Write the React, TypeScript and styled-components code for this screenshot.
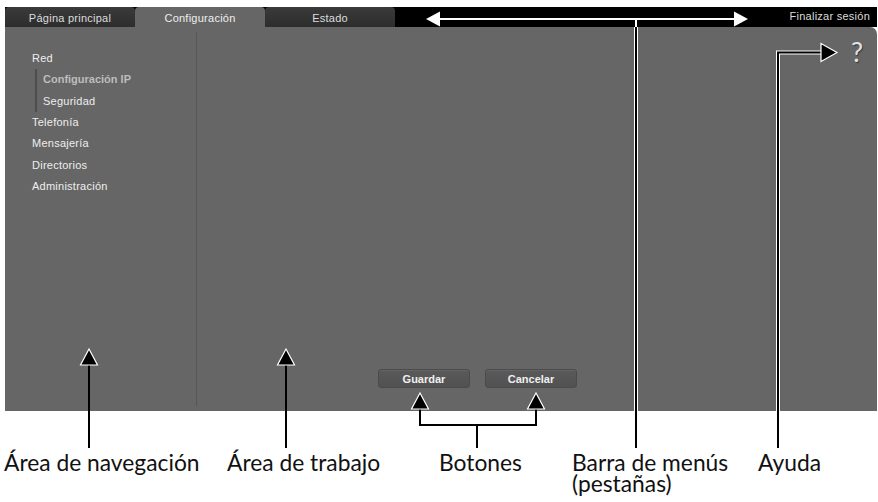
import React from "react";
import styled, { createGlobalStyle } from "styled-components";

const GlobalStyle = createGlobalStyle`
  html, body { margin: 0; padding: 0; background: #fff; }
  body { font-family: "Liberation Sans", Arial, sans-serif; }
  * { box-sizing: border-box; }
`;

const Page = styled.div`
  position: relative;
  width: 878px;
  height: 502px;
  padding-top: 7px;
  overflow: hidden;
`;

const Screen = styled.div`
  margin-left: 5px;
  width: 872px;
  display: flex;
  flex-direction: column;
`;

const TabBar = styled.div`
  height: 20px;
  background: #000;
  display: flex;
  align-items: stretch;
`;

const Tab = styled.div<{ $active?: boolean }>`
  width: 130px;
  display: flex;
  align-items: center;
  justify-content: center;
  padding-top: 2px;
  border-radius: 4px 4px 0 0;
  font-size: 11px;
  letter-spacing: 0.25px;
  color: ${(p) => (p.$active ? "#eeeeee" : "#dddddd")};
  background: ${(p) => (p.$active ? "#666666" : "linear-gradient(#3a3a3a, #2d2d2d)")};
`;

const BarSpacer = styled.div`
  flex: 1;
`;

const Logout = styled.div`
  display: flex;
  align-items: center;
  padding: 0 7px 2px 0;
  font-size: 11px;
  letter-spacing: 0.25px;
  color: #dddddd;
`;

const Panel = styled.div`
  height: 384px;
  background: #666666;
  border-radius: 0 7px 0 0;
  display: flex;
`;

const Sidebar = styled.nav`
  width: 192px;
  margin: 5px 0;
  border-right: 1px solid #565656;
  padding: 16px 0 0 27px;
  display: flex;
  flex-direction: column;
`;

const NavItem = styled.div<{ $active?: boolean }>`
  height: 21.33px;
  line-height: 21.33px;
  font-size: 11px;
  white-space: nowrap;
  letter-spacing: ${(p) => (p.$active ? "0" : "0.25px")};
  font-weight: ${(p) => (p.$active ? "bold" : "normal")};
  color: ${(p) => (p.$active ? "#bdbdbd" : "#eeeeee")};
`;

const SubGroup = styled.div`
  margin-left: 3px;
  border-left: 2px solid #4e4e4e;
  padding-left: 6px;
  display: flex;
  flex-direction: column;
`;

const WorkArea = styled.main`
  flex: 1;
  display: flex;
  flex-direction: column;
  justify-content: space-between;
`;

const HelpRow = styled.div`
  display: flex;
  justify-content: flex-end;
  padding: 11px 14px 0 0;
`;

const HelpMark = styled.span`
  font-family: "Lato", sans-serif;
  font-size: 27px;
  line-height: 27px;
  color: #e2e2e2;
  text-shadow: 1px 1px 1px #3a3a3a;
`;

const ButtonRow = styled.div`
  display: flex;
  gap: 15px;
  padding: 0 0 23px 181px;
`;

const Button = styled.button`
  width: 92px;
  height: 19px;
  padding: 0;
  border: 1px solid #4b4b4b;
  border-radius: 3px;
  background: linear-gradient(#5a5a5a, #515151);
  box-shadow: inset 0 1px 0 rgba(255, 255, 255, 0.07);
  color: #f0f0f0;
  font-family: "Liberation Sans", Arial, sans-serif;
  font-size: 11px;
  font-weight: bold;
`;

const CaptionRow = styled.div`
  margin-top: 41px;
  padding-left: 4px;
  display: grid;
  grid-template-columns: 223px 212px 133px 186px auto;
  font-family: "Lato", sans-serif;
  font-weight: 400;
  font-size: 22.8px;
  line-height: 20.5px;
  color: #111;
`;

const Caption = styled.div`
  white-space: nowrap;
`;

const Overlay = styled.svg`
  position: absolute;
  top: 0;
  left: 0;
  pointer-events: none;
`;

const UpArrow = ({ x, tip, end }: { x: number; tip: number; end: number }) => (
  <g>
    <line x1={x} y1={tip + 14} x2={x} y2={end} stroke="#000" strokeWidth={2} />
    <polygon
      points={`${x},${tip} ${x - 8.5},${tip + 16} ${x + 8.5},${tip + 16}`}
      fill="#000"
      stroke="#fff"
      strokeWidth={1.2}
    />
  </g>
);

const Annotations = () => (
  <Overlay width={878} height={502} viewBox="0 0 878 502">
    {/* menu bar double arrow */}
    <line x1={438} y1={19} x2={736} y2={19} stroke="#fff" strokeWidth={2} />
    <polygon points="426,19 440,11.5 440,26.5" fill="#fff" />
    <polygon points="748,19 734,11.5 734,26.5" fill="#fff" />
    <line x1={636} y1={19} x2={636} y2={27} stroke="#fff" strokeWidth={2} />
    <line x1={636} y1={27} x2={636} y2={411} stroke="#fff" strokeWidth={4} />
    <line x1={636} y1={27} x2={636} y2={448} stroke="#000" strokeWidth={2} />

    {/* help */}
    <path d="M778 411 V52.5 H822" fill="none" stroke="#fff" strokeWidth={4} />
    <path d="M778 448 V52.5 H822" fill="none" stroke="#000" strokeWidth={2} />
    <polygon points="821,43.5 837,52.5 821,61.5" fill="#000" stroke="#fff" strokeWidth={1.2} />

    {/* navigation + work area */}
    <UpArrow x={89} tip={349} end={448} />
    <UpArrow x={286} tip={349} end={448} />

    {/* buttons */}
    <path d="M420 407 V425 H536 V407" fill="none" stroke="#000" strokeWidth={2} />
    <line x1={477} y1={425} x2={477} y2={448} stroke="#000" strokeWidth={2} />
    <polygon points="420,393 411.5,409 428.5,409" fill="#000" stroke="#fff" strokeWidth={1.2} />
    <polygon points="536,393 527.5,409 544.5,409" fill="#000" stroke="#fff" strokeWidth={1.2} />
  </Overlay>
);

const tabs = ["Página principal", "Configuración", "Estado"];
const subItems = [
  { label: "Configuración IP", active: true },
  { label: "Seguridad", active: false },
];
const afterItems = ["Telefonía", "Mensajería", "Directorios", "Administración"];
const captions = ["Área de navegación", "Área de trabajo", "Botones", "Barra de menús\n(pestañas)", "Ayuda"];

export default function App() {
  return (
    <>
      <GlobalStyle />
      <Page>
        <Screen>
          <TabBar>
            {tabs.map((t) => (
              <Tab key={t} $active={t === "Configuración"}>
                {t}
              </Tab>
            ))}
            <BarSpacer />
            <Logout>Finalizar sesión</Logout>
          </TabBar>
          <Panel>
            <Sidebar>
              <NavItem>Red</NavItem>
              <SubGroup>
                {subItems.map((s) => (
                  <NavItem key={s.label} $active={s.active}>
                    {s.label}
                  </NavItem>
                ))}
              </SubGroup>
              {afterItems.map((a) => (
                <NavItem key={a}>{a}</NavItem>
              ))}
            </Sidebar>
            <WorkArea>
              <HelpRow>
                <HelpMark>?</HelpMark>
              </HelpRow>
              <ButtonRow>
                <Button>Guardar</Button>
                <Button>Cancelar</Button>
              </ButtonRow>
            </WorkArea>
          </Panel>
        </Screen>
        <CaptionRow>
          {captions.map((c) => (
            <Caption key={c}>
              {c.split("\n").map((line) => (
                <div key={line}>{line}</div>
              ))}
            </Caption>
          ))}
        </CaptionRow>
        <Annotations />
      </Page>
    </>
  );
}
